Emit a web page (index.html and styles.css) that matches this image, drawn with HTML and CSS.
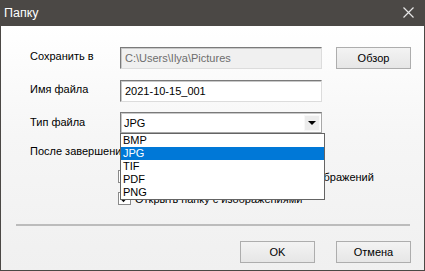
FILE: index.html
```html
<!doctype html>
<html lang="ru">
<head>
	<meta charset="UTF-8">
	<title>Папку</title>
	<link rel="stylesheet" href="styles.css">
</head>
<body>
	<div class="window">
		<div class="title_bar">
			<span class="title">Папку</span>
			<svg class="close" width="11" height="11" viewBox="0 0 11 11">
				<path d="M0.5 0.5 L10.5 10.5 M10.5 0.5 L0.5 10.5" stroke="#e6e6e6" stroke-width="1.2" fill="none"/>
			</svg>
		</div>

		<div class="content">
			<div class="form">
				<label class="lbl">Сохранить в</label>
				<div class="field disabled">C:\Users\Ilya\Pictures</div>
				<button class="btn">Обзор</button>

				<label class="lbl">Имя файла</label>
				<div class="field">2021-10-15_001</div>
				<span></span>

				<label class="lbl">Тип файла</label>
				<div class="field select">
					<span>JPG</span>
					<span class="arrow"><i></i></span>
				</div>
				<span></span>
			</div>

			<div class="after">
				<div class="lbl">После завершения</div>
				<div class="check_row">
					<span class="check"></span>
					<span>Открыть в программе просмотра изображений</span>
				</div>
				<div class="check_row">
					<span class="check on">
						<svg width="9" height="9" viewBox="0 0 9 9"><path d="M1 4.5 L3.5 7 L8 2" stroke="#111" stroke-width="1.6" fill="none"/></svg>
					</span>
					<span>Открыть папку с изображениями</span>
				</div>
			</div>

			<div class="sep"></div>

			<div class="footer">
				<button class="btn">OK</button>
				<button class="btn">Отмена</button>
			</div>

			<!-- выпадающий список -->
			<ul class="drop_list">
				<li>BMP</li>
				<li class="active">JPG</li>
				<li>TIF</li>
				<li>PDF</li>
				<li>PNG</li>
			</ul>
		</div>
	</div>
</body>
</html>
```

FILE: styles.css
```css
*{
	margin: 0;
	padding: 0;
	list-style-type: none;
	box-sizing: border-box;
}
body{
	background: #fff;
	font-family: "Liberation Sans", "DejaVu Sans", sans-serif;
	font-size: 11px;
	color: #000;
}
.window{
	width: 425px;
	height: 271px;
	display: flex;
	flex-direction: column;
}
.title_bar{
	height: 26px;
	background: #4b4845;
	display: flex;
	align-items: center;
	justify-content: space-between;
	padding: 0 11px 0 4px;
}
.title{
	color: #fff;
	font-size: 12.5px;
}
.close{
	display: block;
	margin-top: -1px;
}
.content{
	flex: 1;
	position: relative;
	border: 1px solid #4b4845;
	border-top: none;
	background: linear-gradient(#fff 0%, #f6f6f6 45%, #f0f0f0 100%);
	padding: 21px 0 0 29px;
}
.form{
	display: grid;
	grid-template-columns: 90px 202px 88px;
	grid-template-rows: 22px 22px 20px;
	row-gap: 11px;
}
.form .btn{
	margin-left: 14px;
}
.form .select{
	margin-top: -1px;
}
.lbl{
	display: block;
	line-height: 14px;
	padding-top: 2px;
}
.field{
	background: #fff;
	border: 1px solid;
	border-color: #7a7a7a #dcdcdc #dcdcdc #7a7a7a;
	box-shadow: inset 1px 1px 0 #c8c8c8;
	padding: 0 4px;
	line-height: 20px;
	white-space: nowrap;
	overflow: hidden;
}
.field.disabled{
	background: #f0f0f0;
	color: #6d6d6d;
}
.select{
	display: flex;
	justify-content: space-between;
	align-items: center;
	line-height: 18px;
	padding: 0 1px 0 3px;
	border-color: #7a7a7a #a8a8a8 #a8a8a8 #7a7a7a;
}
.arrow{
	width: 16px;
	height: 16px;
	background: #ececec;
	border: 1px solid #f8f8f8;
	display: flex;
	align-items: center;
	justify-content: center;
}
.arrow i{
	width: 0;
	height: 0;
	border-left: 4px solid transparent;
	border-right: 4px solid transparent;
	border-top: 4px solid #000;
	margin-top: 1px;
}
.btn{
	width: 75px;
	height: 22px;
	border: 1px solid #adadad;
	background: linear-gradient(#f3f3f3, #e6e6e6);
	font-family: inherit;
	font-size: 11px;
	color: #000;
}
.after{
	margin-top: 11px;
}
.after .lbl{
	padding-top: 0;
}
.check_row{
	display: flex;
	align-items: center;
	gap: 4px;
	margin-left: 88px;
	height: 13px;
	margin-top: 12px;
}
.check_row + .check_row{
	margin-top: 9px;
}
.check{
	width: 13px;
	height: 13px;
	border: 1px solid #8a8a8a;
	background: #fff;
	display: flex;
	align-items: center;
	justify-content: center;
}
.sep{
	height: 2px;
	background: #bcbcbc;
	margin: 19px 14px 0 -14px;
}
.footer{
	display: flex;
	justify-content: flex-end;
	gap: 21px;
	padding-right: 13px;
	margin-top: 15px;
}
.drop_list{
	position: absolute;
	left: 119px;
	top: 107px;
	width: 205px;
	background: #fff;
	border: 1px solid #646464;
}
.drop_list li{
	height: 13px;
	line-height: 13px;
	padding-left: 2px;
}
.drop_list li.active{
	background: #0078d7;
	color: #fff;
}
```
